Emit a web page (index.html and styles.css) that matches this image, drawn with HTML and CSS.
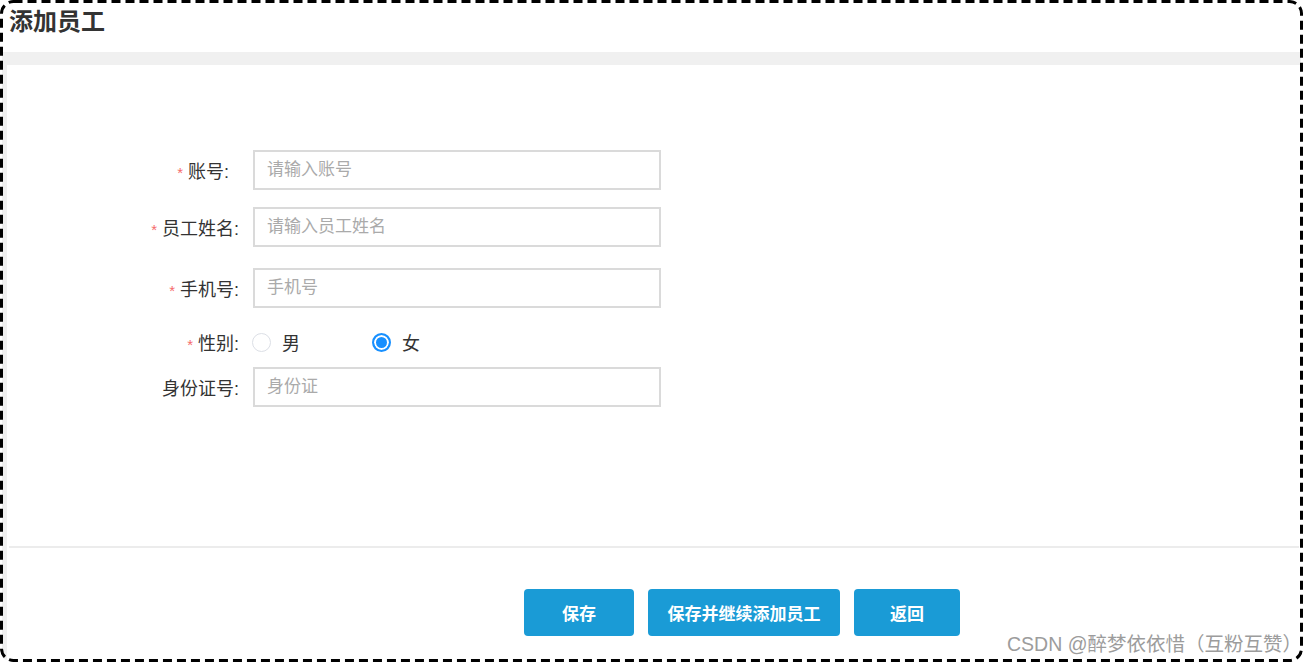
FILE: index.html
```html
<!DOCTYPE html>
<html lang="zh-CN">
<head>
    <meta charset="UTF-8">
    <title>添加员工</title>
    <link rel="stylesheet" href="styles.css">
</head>
<body>
    <div class="frame">
        <div class="header">
            <h1 class="title">添加员工</h1>
        </div>
        <div class="band"></div>
        <div class="main">
            <div class="side"></div>
            <div class="content">
                <form class="form">
                    <div class="row row-account">
                        <label class="label"><span class="req">*</span> 账号:&nbsp;&nbsp;</label>
                        <input class="input" type="text" placeholder="请输入账号">
                    </div>
                    <div class="row row-name">
                        <label class="label"><span class="req">*</span> 员工姓名:</label>
                        <input class="input" type="text" placeholder="请输入员工姓名">
                    </div>
                    <div class="row row-phone">
                        <label class="label"><span class="req">*</span> 手机号:</label>
                        <input class="input" type="text" placeholder="手机号">
                    </div>
                    <div class="row row-sex">
                        <label class="label"><span class="req">*</span> 性别:</label>
                        <div class="radios">
                            <span class="radio"><span class="dot"></span>男</span>
                            <span class="radio checked"><span class="dot"></span>女</span>
                        </div>
                    </div>
                    <div class="row row-id">
                        <label class="label">身份证号:</label>
                        <input class="input" type="text" placeholder="身份证">
                    </div>
                </form>
                <div class="footer">
                    <button class="btn btn-save" type="button">保存</button>
                    <button class="btn btn-next" type="button">保存并继续添加员工</button>
                    <button class="btn btn-back" type="button">返回</button>
                </div>
            </div>
        </div>
        <div class="mark">CSDN @醉梦依依惜（互粉互赞）</div>
        <svg class="edge" width="1303" height="662" viewBox="0 0 1303 662">
            <rect x="1.5" y="1.5" width="1300" height="659" rx="12" ry="12"
                  fill="none" stroke="#000" stroke-width="3" stroke-dasharray="9 5"/>
        </svg>
    </div>
</body>
</html>
```

FILE: styles.css
```css
* {
    box-sizing: border-box;
}

body {
    margin: 0;
    font-family: "Liberation Sans", "Noto Sans CJK SC", sans-serif;
    color: #333;
    background: #fff;
}

.frame {
    position: relative;
    width: 1303px;
    height: 662px;
    padding: 2px;
    border-radius: 12px;
    overflow: hidden;
    display: flex;
    flex-direction: column;
}

.edge {
    position: absolute;
    left: 0;
    top: 0;
    pointer-events: none;
}

.header {
    height: 50px;
    padding: 4px 0 0 7px;
}

.title {
    margin: 0;
    font-size: 24px;
    line-height: 32px;
    font-weight: bold;
    color: #333;
}

.band {
    height: 13px;
    background: #f0f0f0;
}

.main {
    flex: 1;
    display: flex;
}

.side {
    width: 5px;
    background: #f0f0f0;
}

.content {
    flex: 1;
    display: flex;
    flex-direction: column;
}

.form {
    height: 483px;
    padding: 85px 0 0 105px;
    border-bottom: 2px solid #ececec;
    margin: 0 2px;
}

.row {
    display: flex;
    align-items: center;
}

.row-account { margin-bottom: 17px; }
.row-name { margin-bottom: 21px; }
.row-phone { margin-bottom: 21px; }
.row-sex { height: 26px; margin-bottom: 12px; }

.label {
    width: 125px;
    margin-right: 14px;
    text-align: right;
    font-size: 18px;
    color: #333;
}

.req {
    color: #f56c6c;
    font-size: 15px;
}

.input {
    width: 408px;
    height: 40px;
    border: 2px solid #dadada;
    padding: 0 12px;
    font-size: 17px;
    font-family: inherit;
    color: #333;
    outline: none;
}

.input::placeholder {
    color: #aaa;
}

.radios {
    display: flex;
    margin-left: -1px;
}

.radio {
    display: flex;
    align-items: center;
    width: 120px;
    font-size: 18px;
    color: #333;
}

.dot {
    width: 19px;
    height: 19px;
    border: 1px solid #dcdfe6;
    border-radius: 50%;
    margin-right: 11px;
}

.radio.checked .dot {
    border: 2px solid #1890ff;
    background: #1890ff;
    box-shadow: inset 0 0 0 2px #fff;
}

.footer {
    display: flex;
    gap: 14px;
    padding: 41px 0 0 517px;
}

.btn {
    height: 47px;
    border: none;
    border-radius: 4px;
    background: #1a9bd6;
    color: #fff;
    font-family: inherit;
    font-size: 17px;
    font-weight: bold;
    cursor: pointer;
}

.btn-save { width: 110px; }
.btn-next { width: 192px; }
.btn-back { width: 106px; }

.mark {
    position: absolute;
    right: 1px;
    bottom: 5px;
    font-size: 19.5px;
    color: #9c9c9c;
}
```
